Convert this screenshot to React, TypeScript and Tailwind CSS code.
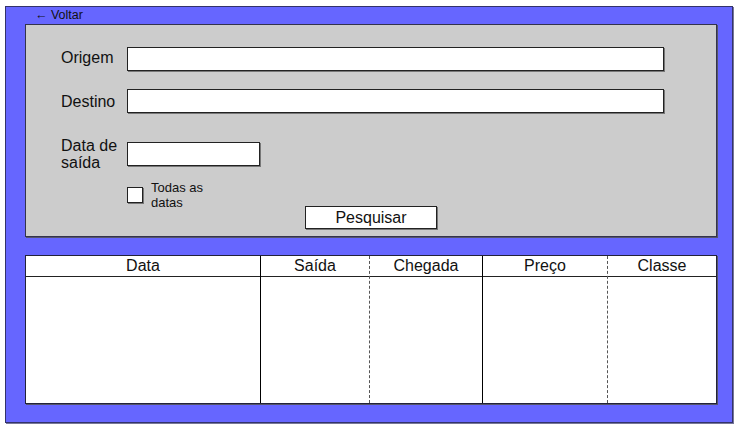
import React from "react";

const font = { fontFamily: '"Liberation Sans", Arial, sans-serif' };

export default function App() {
  const cols = [
    { label: "Data", w: "w-[234px]", border: "" },
    { label: "Saída", w: "w-[109px]", border: "border-l border-black" },
    { label: "Chegada", w: "w-[113px]", border: "border-l border-dashed border-[#555]" },
    { label: "Preço", w: "w-[125px]", border: "border-l border-black" },
    { label: "Classe", w: "w-[109px]", border: "border-l border-dashed border-[#555]" },
  ];
  return (
    <div className="w-[736px] h-[432px] bg-white pl-[5px] pt-[6px] text-[#111]" style={font}>
      <div className="w-[728px] h-[417px] bg-[#6666ff] border border-[#33336a] shadow-[1px_1px_0_#777799] pl-[19px] flex flex-col">
        <div className="h-[17px] pl-[10px] text-[12.5px] leading-[16px] text-[#111]">← Voltar</div>
        <div className="w-[692px] h-[213px] bg-[#cccccc] border border-[#33334d] shadow-[1px_1px_0_#55556a] pt-[22px] pl-[35px] flex flex-col">
          <div className="flex items-center h-[24px]">
            <div className="w-[66px] text-[16px] -mt-[3px]">Origem</div>
            <div className="w-[537px] h-[24px] bg-white border border-[#222] shadow-[1px_1px_0_#777]" />
          </div>
          <div className="flex items-center h-[24px] mt-[18px]">
            <div className="w-[66px] text-[16px] mt-[1px]">Destino</div>
            <div className="w-[537px] h-[24px] bg-white border border-[#222] shadow-[1px_1px_0_#777]" />
          </div>
          <div className="flex items-center mt-[24px] h-[34px]">
            <div className="w-[66px] text-[16px] leading-[17px]">
              Data de
              <br />
              saída
            </div>
            <div className="w-[133px] h-[24px] bg-white border border-[#222] shadow-[1px_1px_0_#777]" />
          </div>
          <div className="flex items-start mt-[11px] ml-[66px]">
            <div className="w-[16px] h-[16px] mt-[5px] bg-white border border-[#222] shadow-[1px_1px_0_#777]" />
            <div className="ml-[8px] -mt-[2px] text-[13px] leading-[15px]">
              Todas as
              <br />
              datas
            </div>
          </div>
          <div className="-mt-[4px] ml-[244px] w-[132px] h-[23px] bg-white border border-[#222] shadow-[1px_1px_0_#777] text-[16px] leading-[21px] text-center">
            Pesquisar
          </div>
        </div>
        <div className="mt-[18px] w-[692px] h-[149px] bg-white border border-[#22223a] shadow-[1px_1px_0_#55556a] flex">
          {cols.map((c) => (
            <div key={c.label} className={`${c.w} ${c.border} h-full flex flex-col`}>
              <div className="h-[21px] text-[16px] leading-[20px] text-center border-b border-[#222]">
                {c.label}
              </div>
              <div className="flex-1" />
            </div>
          ))}
        </div>
      </div>
    </div>
  );
}
